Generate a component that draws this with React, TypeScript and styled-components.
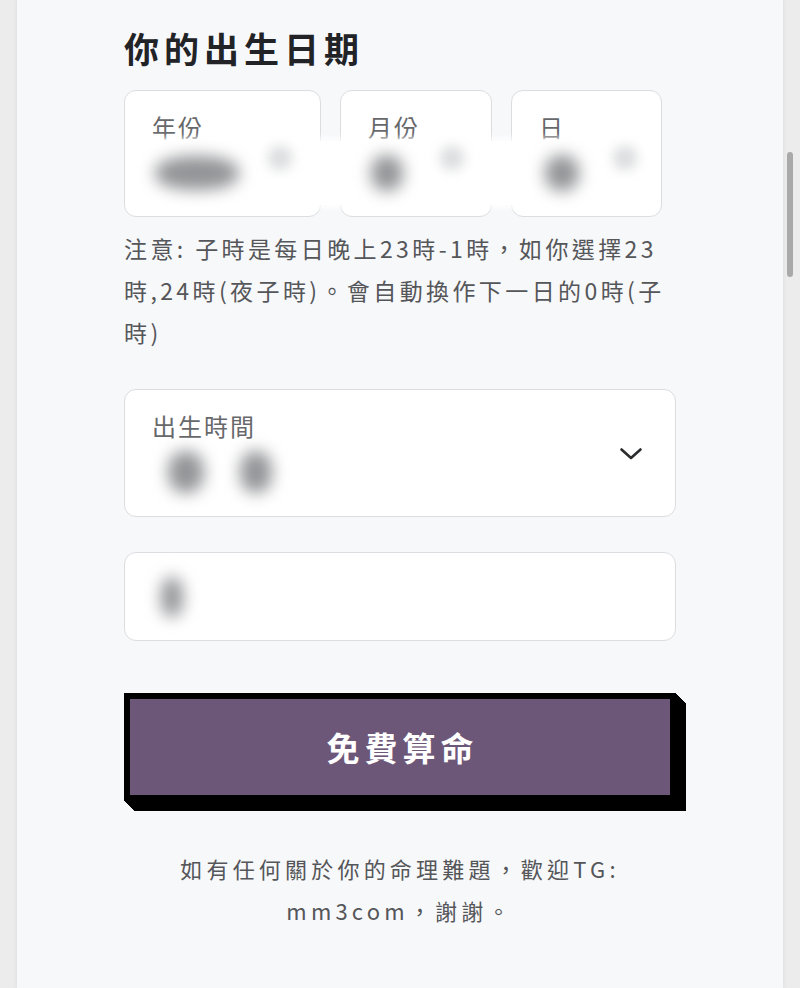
import React from "react";
import styled, { createGlobalStyle } from "styled-components";

// === THEME ===
const colors = {
  page: "#ececec",
  panel: "#f7f8fa",
  card: "#ffffff",
  border: "#dcdde1",
  heading: "#222326",
  text: "#555659",
  label: "#67686b",
  purple: "#6c5779",
  ink: "#000000",
  smudge: "#939497",
};

const font = `"Noto Sans CJK TC", "Noto Sans", "Liberation Sans", sans-serif`;

// stepped shadow so the corners come out cut on the diagonal
const stepShadow = Array.from({ length: 10 }, (_, i) => `${i + 1}px ${i + 1}px 0 ${colors.ink}`).join(", ");

const GlobalStyle = createGlobalStyle`
  html, body {
    margin: 0;
    padding: 0;
    background: ${colors.page};
    font-family: ${font};
  }
  * { box-sizing: border-box; }
`;

// === LAYOUT ===
const Page = styled.div`
  min-height: 988px;
  padding: 0 17px;
  background: ${colors.page};
`;

const Panel = styled.main`
  min-height: 988px;
  background: ${colors.panel};
  box-shadow: 0 0 5px rgba(0, 0, 0, 0.08);
  padding: 24px 107px 40px;
  display: flex;
  flex-direction: column;
`;

const Heading = styled.h2`
  margin: 0;
  font-size: 35px;
  line-height: 48px;
  font-weight: 700;
  letter-spacing: 5px;
  color: ${colors.heading};
`;

// === DATE FIELDS ===
const DateRow = styled.div`
  position: relative;
  display: flex;
  gap: 19px;
  margin-top: 18px;
`;

const DateField = styled.div<{ $w: number }>`
  width: ${(p) => p.$w}px;
  height: 127px;
  background: ${colors.card};
  border: 1.5px solid ${colors.border};
  border-radius: 12px;
  padding: 20px 0 0 27px;
`;

const FieldLabel = styled.div`
  font-size: 24px;
  line-height: 32px;
  letter-spacing: 2px;
  color: ${colors.label};
`;

// blurred-out selected values laid over the row
const Redaction = styled.div`
  position: absolute;
  left: 14px;
  top: 51px;
  width: 507px;
  height: 64px;
  background: ${colors.card};
  box-shadow: 0 0 6px 3px rgba(255, 255, 255, 0.9);
  display: flex;
  align-items: center;
`;

const Smudge = styled.div<{ $w: number; $h: number; $light?: boolean; $gap: number; $dy?: number }>`
  flex: none;
  width: ${(p) => p.$w}px;
  height: ${(p) => p.$h}px;
  margin-left: ${(p) => p.$gap}px;
  transform: translateY(${(p) => p.$dy ?? 0}px);
  border-radius: 45%;
  background: ${(p) => (p.$light ? "#dcdddf" : colors.smudge)};
  filter: blur(${(p) => (p.$light ? 6 : 8)}px);
`;

const Note = styled.p`
  margin: 10px 0 0;
  font-size: 23px;
  line-height: 42px;
  letter-spacing: 3.4px;
  color: ${colors.text};
`;

// === SELECT / INPUT ===
const SelectBox = styled.div`
  margin-top: 36px;
  height: 128px;
  background: ${colors.card};
  border: 1.5px solid ${colors.border};
  border-radius: 12px;
  padding: 20px 32px 0 27px;
  display: flex;
  justify-content: space-between;
  align-items: flex-start;
`;

const SelectMain = styled.div`
  display: flex;
  flex-direction: column;
`;

const ValueRow = styled.div`
  display: flex;
  align-items: center;
  height: 60px;
`;

const Chevron = styled.svg`
  margin-top: 37px;
  flex: none;
`;

const InputBox = styled.div`
  margin-top: 35px;
  height: 89px;
  background: ${colors.card};
  border: 1.5px solid ${colors.border};
  border-radius: 12px;
  padding: 0 0 0 16px;
  display: flex;
  align-items: center;
`;

// === BUTTON ===
const SubmitButton = styled.button`
  margin-top: 52px;
  height: 108px;
  width: 100%;
  background: ${colors.purple};
  border: 6px solid ${colors.ink};
  box-shadow: ${stepShadow};
  border-radius: 0;
  color: #ffffff;
  font-family: ${font};
  font-size: 33px;
  font-weight: 700;
  letter-spacing: 5px;
  padding: 0 0 0 5px;
  cursor: pointer;
`;

const Footer = styled.p`
  margin: 46px 0 0;
  text-align: center;
  font-size: 22px;
  line-height: 42px;
  letter-spacing: 4.2px;
  color: ${colors.text};
`;

const ScrollThumb = styled.div`
  position: fixed;
  right: 7px;
  top: 152px;
  width: 6px;
  height: 125px;
  border-radius: 3px;
  background: #a9a9a9;
`;

const App: React.FC = () => {
  return (
    <>
      <GlobalStyle />
      <Page>
        <Panel>
          <Heading>你的出生日期</Heading>

          <DateRow>
            <DateField $w={197}>
              <FieldLabel>年份</FieldLabel>
            </DateField>
            <DateField $w={152}>
              <FieldLabel>月份</FieldLabel>
            </DateField>
            <DateField $w={151}>
              <FieldLabel>日</FieldLabel>
            </DateField>
            <Redaction>
              <Smudge $w={84} $h={34} $gap={17} />
              <Smudge $w={24} $h={24} $gap={29} $light $dy={-15} />
              <Smudge $w={32} $h={36} $gap={79} />
              <Smudge $w={24} $h={24} $gap={37} $light $dy={-15} />
              <Smudge $w={34} $h={36} $gap={81} />
              <Smudge $w={24} $h={24} $gap={34} $light $dy={-15} />
            </Redaction>
          </DateRow>

          <Note>
            注意: 子時是每日晚上23時-1時，如你選擇23時,24時(夜子時)。會自動換作下一日的0時(子時)
          </Note>

          <SelectBox>
            <SelectMain>
              <FieldLabel>出生時間</FieldLabel>
              <ValueRow>
                <Smudge $w={36} $h={42} $gap={16} />
                <Smudge $w={32} $h={42} $gap={36} />
              </ValueRow>
            </SelectMain>
            <Chevron width="24" height="14" viewBox="0 0 24 14">
              <path
                d="M2.5 2.5 L12 11 L21.5 2.5"
                fill="none"
                stroke="#2b2c2e"
                strokeWidth="2.6"
                strokeLinecap="round"
                strokeLinejoin="round"
              />
            </Chevron>
          </SelectBox>

          <InputBox>
            <Smudge $w={22} $h={40} $gap={20} />
          </InputBox>

          <SubmitButton type="button">免費算命</SubmitButton>

          <Footer>
            如有任何關於你的命理難題，歡迎TG:
            <br />
            mm3com，謝謝。
          </Footer>
        </Panel>
      </Page>
      <ScrollThumb />
    </>
  );
};

export default App;
